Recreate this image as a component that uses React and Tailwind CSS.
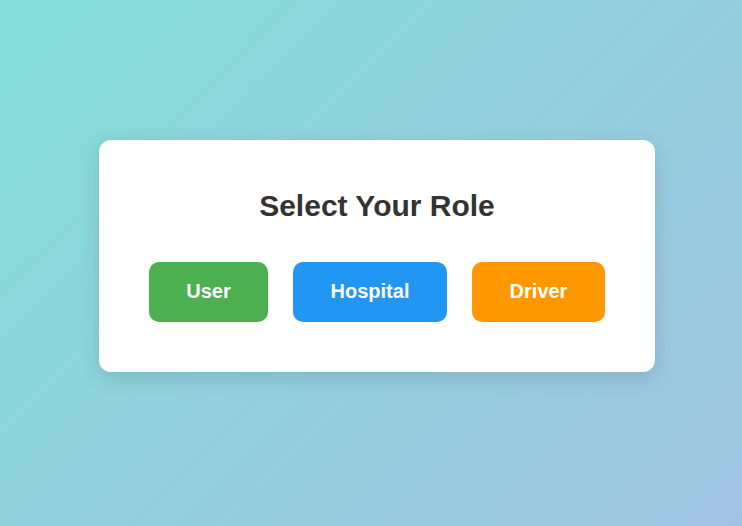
export default function App() {
  return (
    <div
      className="w-[742px] h-[526px] bg-[linear-gradient(135deg,#83ddd8_0%,#a1c3e2_100%)] pt-[140px] pl-[99px]"
      style={{ fontFamily: '"Liberation Sans", Arial, sans-serif' }}
    >
      <div className="w-[556px] h-[232px] bg-white rounded-[12px] shadow-[0_6px_20px_rgba(0,0,0,0.12)] flex flex-col items-center pt-[49px]">
        <h2 className="text-[30px] font-bold text-[#333333] leading-[34px]">Select Your Role</h2>
        <div className="flex gap-[25px] mt-[39px]">
          <button className="h-[60px] w-[119px] pb-[2px] rounded-[10px] bg-[#4caf50] text-white text-[20px] font-bold flex items-center justify-center">User</button>
          <button className="h-[60px] w-[154px] pb-[2px] rounded-[10px] bg-[#2196f3] text-white text-[20px] font-bold flex items-center justify-center">Hospital</button>
          <button className="h-[60px] w-[133px] pb-[2px] rounded-[10px] bg-[#ff9800] text-white text-[20px] font-bold flex items-center justify-center">Driver</button>
        </div>
      </div>
    </div>
  );
}
